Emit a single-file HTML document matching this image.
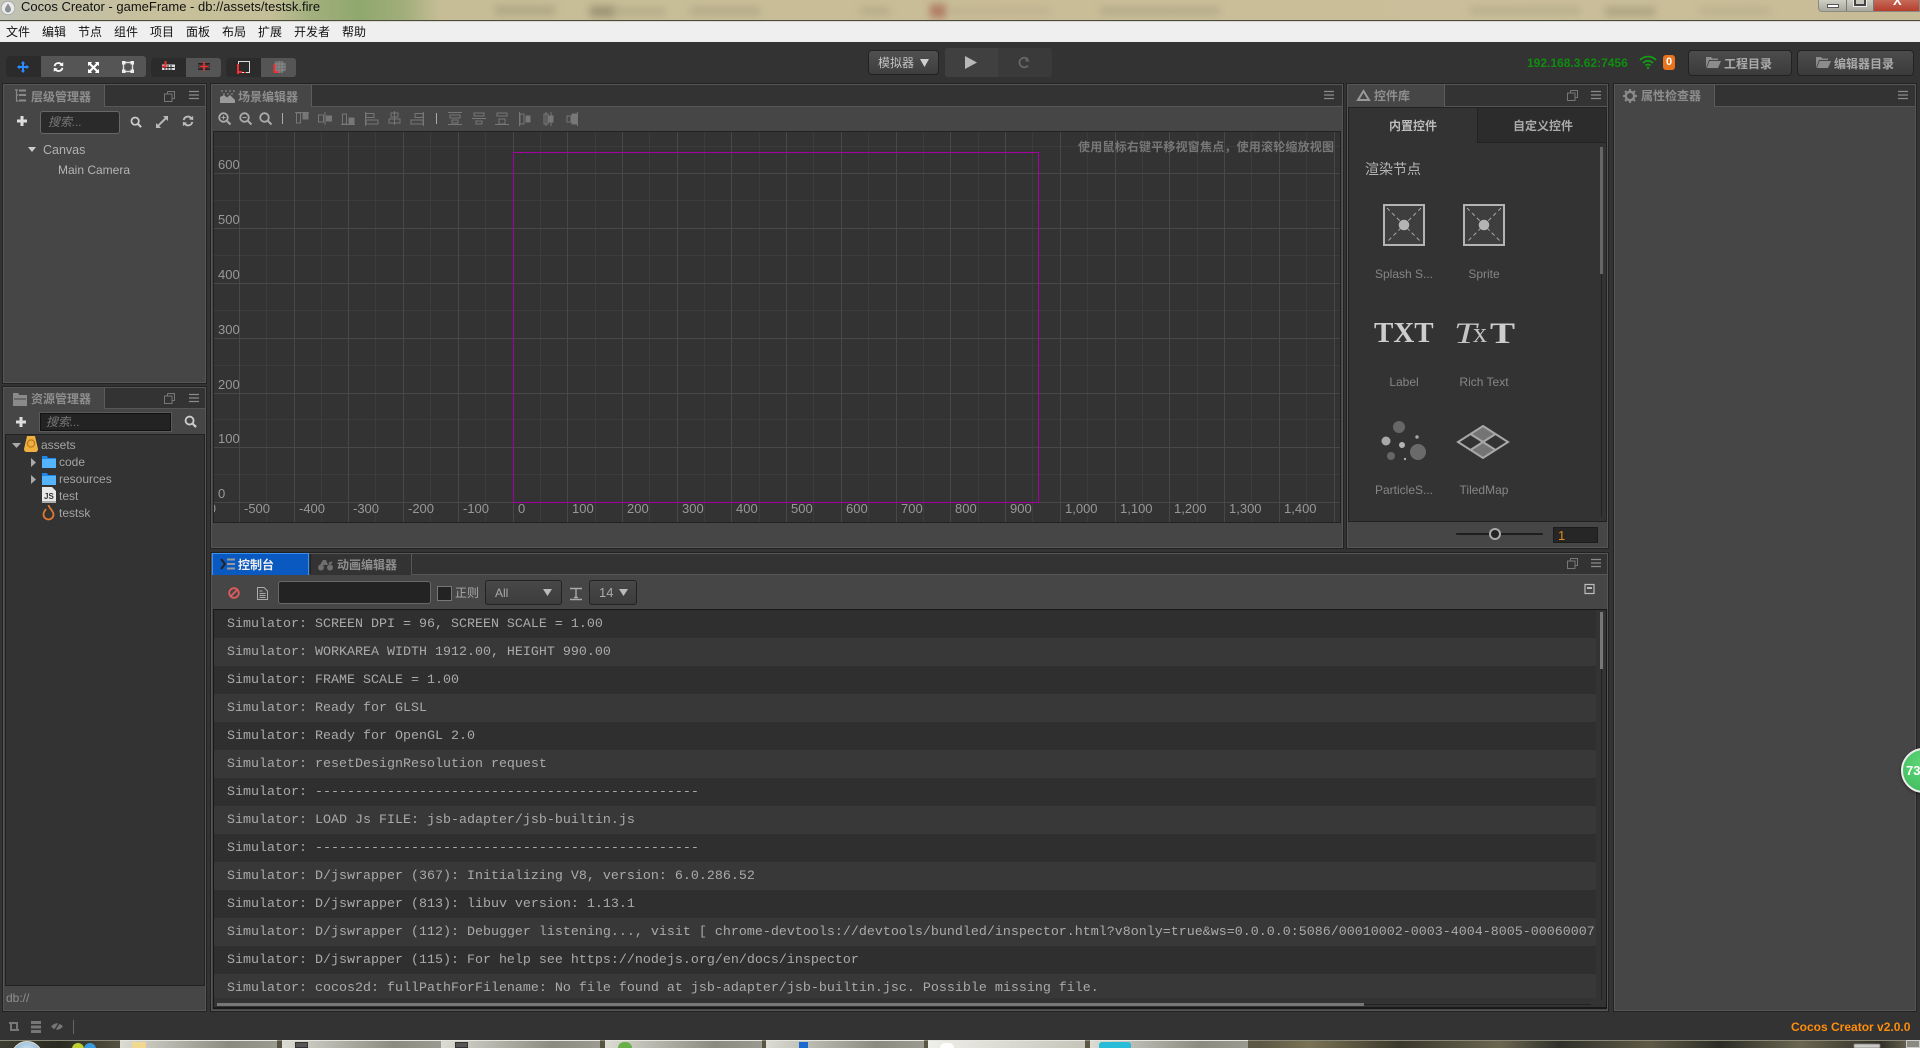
<!DOCTYPE html>
<html lang="zh"><head><meta charset="utf-8"><title>Cocos Creator</title>
<style>
*{box-sizing:border-box;margin:0;padding:0}
html,body{width:1920px;height:1048px;overflow:hidden;background:#333}
body{position:relative;font-family:"Liberation Sans","WenQuanYi Zen Hei","Noto Sans CJK SC",sans-serif;font-size:12px;color:#aaa}
.a{position:absolute}
.t{position:absolute;white-space:nowrap;line-height:16px;height:16px}
.b{font-weight:bold}
svg{position:absolute;overflow:visible}
.panel{position:absolute;background:#464646;border:1px solid #565656;outline:1px solid #222}
.band{position:absolute;background:#333;border-bottom:1px solid #565656}
.tab{position:absolute;background:#464646;border-right:1px solid #5c5c5c}
.tt{color:#8e8e8e;font-weight:bold}
.inp{position:absolute;background:#232323;border:1px solid #686868;border-radius:3px}
.sel{position:absolute;background:linear-gradient(#484848,#3c3c3c);border:1px solid #222;border-radius:3px;color:#aaa}
.row{position:absolute;left:214px;width:1382px;height:28px}
.log{position:absolute;left:227px;font-family:"Liberation Mono",monospace;font-size:13.33px;line-height:16px;white-space:pre;color:#aaa}
.lab{position:absolute;white-space:nowrap;line-height:16px;color:#868686;text-align:center;width:80px}
.blur{position:absolute;filter:blur(4px);opacity:.55}
.tb{position:absolute;top:1040px;height:8px;background:linear-gradient(90deg,#dcdcd4,#8a8a7e 70%,#9a9a90);border-top:1px solid #e6e6e0}
</style></head><body>
<svg width="0" height="0" style="position:absolute">
<defs>
<symbol id="mag" viewBox="0 0 14 14"><circle cx="6" cy="6" r="4.3" fill="none" stroke="currentColor" stroke-width="2"/><path d="M9 9l4 4" stroke="currentColor" stroke-width="2.4"/></symbol>
<symbol id="menu" viewBox="0 0 12 10"><path d="M1 1.5h10M1 5h10M1 8.500h10" stroke="currentColor" stroke-width="1.200"/></symbol>
<symbol id="rest" viewBox="0 0 11 11"><path d="M3.500.5h7v7h-2M3.500.5v2" fill="none" stroke="currentColor"/><path d="M.5 3h7.500v7.500H.5z" fill="none" stroke="currentColor"/></symbol>
<symbol id="ref" viewBox="0 0 14 14"><path d="M2 6a5 5 0 0 1 9-2M12 8a5 5 0 0 1-9 2" fill="none" stroke="currentColor" stroke-width="2.200"/><path d="M8 5l5 1V1zM6 9L1 8v5z" fill="currentColor"/></symbol>
<symbol id="spr" viewBox="0 0 42 42"><rect x="1" y="1" width="40" height="40" fill="#3e3e3e" stroke="#b4b4b4" stroke-width="2"/><path d="M4 4l34 34M38 4L4 38" stroke="#a8a8a8" stroke-dasharray="4 3"/><circle cx="21" cy="21" r="5.300" fill="#b4b4b4"/></symbol>
</defs></svg>

<!-- title bar -->
<div class="a" style="left:0;top:0;width:1920px;height:20px;background:linear-gradient(90deg,#c0c3b6 0,#c2c0a6 60px,#c8c09c 150px,#c4bf98 270px,#a3b07e 310px,#8fa86c 360px,#a2ae7c 405px,#c6bd96 440px,#c9bd97 1000px,#cabf9a 1500px,#c7bc95 1920px);overflow:hidden">
<div class="blur" style="left:495px;top:6px;width:60px;height:9px;background:#9c9478"></div>
<div class="blur" style="left:590px;top:6px;width:25px;height:11px;background:#79735a"></div>
<div class="blur" style="left:615px;top:8px;width:50px;height:7px;background:#a39b7e"></div>
<div class="blur" style="left:690px;top:7px;width:70px;height:8px;background:#a39b7e"></div>
<div class="blur" style="left:860px;top:7px;width:30px;height:8px;background:#a79f80"></div>
<div class="blur" style="left:930px;top:4px;width:16px;height:14px;background:#9c4a3c"></div>
<div class="blur" style="left:950px;top:8px;width:100px;height:6px;background:#b0a788"></div>
<div class="blur" style="left:1100px;top:7px;width:120px;height:8px;background:#a59d7f"></div>
<div class="blur" style="left:1470px;top:7px;width:110px;height:7px;background:#a89f80"></div>
<div class="blur" style="left:1605px;top:7px;width:50px;height:9px;background:#968e70"></div>
<div class="blur" style="left:1700px;top:8px;width:70px;height:6px;background:#aca384"></div>
</div>
<svg style="left:1px;top:1px" width="14" height="14" viewBox="0 0 14 14"><circle cx="7" cy="7" r="6.700" fill="#eaeaea" stroke="#999" stroke-width=".6"/><path d="M7 2.500C5 5.500 4 7 4 8.500a3 3 0 0 0 6 0C10 7 9 5.500 7 2.500z" fill="#8a8f92"/></svg>
<div class="t" style="left:21px;top:-1px;font-size:13px;color:#111">Cocos Creator - gameFrame - db://assets/testsk.fire</div>
<!-- window buttons -->
<div class="a" style="left:1818px;top:0;width:102px;height:12px;border:1px solid #8a8a80;border-top:0;border-radius:0 0 0 4px;background:linear-gradient(#cfcfc4,#a8a89c);overflow:hidden">
<div class="a" style="left:27px;top:0;width:1px;height:12px;background:#777"></div>
<div class="a" style="left:54px;top:0;width:1px;height:12px;background:#777"></div>
<div class="a" style="left:55px;top:0;width:47px;height:12px;background:linear-gradient(#c66a58,#b53a2a)"></div>
<div class="a" style="left:8px;top:4px;width:12px;height:4px;background:#fff;border:1px solid #555"></div>
<div class="a" style="left:35px;top:-3px;width:12px;height:9px;background:#c7c7bc;border:2px solid #444;box-shadow:0 0 0 1px #eee"></div>
<div class="a" style="left:74px;top:-7px;color:#fff;font-weight:bold;font-size:13px">X</div>
</div>
<!-- menu -->
<div class="a" style="left:0;top:20px;width:1920px;height:2px;background:linear-gradient(#4c4a42 50%,#d8d8cc 50%)"></div>
<div class="a" style="left:0;top:22px;width:1920px;height:20px;background:#efefef"></div>
<div class="t" style="left:6px;top:24px;color:#111">文件</div>
<div class="t" style="left:42px;top:24px;color:#111">编辑</div>
<div class="t" style="left:78px;top:24px;color:#111">节点</div>
<div class="t" style="left:114px;top:24px;color:#111">组件</div>
<div class="t" style="left:150px;top:24px;color:#111">项目</div>
<div class="t" style="left:186px;top:24px;color:#111">面板</div>
<div class="t" style="left:222px;top:24px;color:#111">布局</div>
<div class="t" style="left:258px;top:24px;color:#111">扩展</div>
<div class="t" style="left:294px;top:24px;color:#111">开发者</div>
<div class="t" style="left:342px;top:24px;color:#111">帮助</div>

<!-- toolbar left -->
<div class="a" style="left:6px;top:56px;width:140px;height:21px;background:#555;border-radius:3px"></div>
<div class="a" style="left:6px;top:56px;width:35px;height:21px;background:#2b2b2b;border-radius:3px 0 0 3px"></div>
<div class="a" style="left:151px;top:58px;width:70px;height:19px;background:#555;border-radius:3px"></div>
<div class="a" style="left:151px;top:58px;width:35px;height:19px;background:#2b2b2b;border-radius:3px 0 0 3px"></div>
<div class="a" style="left:226px;top:58px;width:70px;height:19px;background:#555;border-radius:3px"></div>
<div class="a" style="left:226px;top:58px;width:35px;height:19px;background:#2b2b2b;border-radius:3px 0 0 3px"></div>
<svg style="left:17px;top:61px" width="12" height="12" viewBox="0 0 12 12"><path d="M6 0l2.200 2.500H7V5h2.500V3.800L12 6 9.500 8.200V7H7v2.500h1.200L6 12 3.800 9.500H5V7H2.500v1.200L0 6l2.500-2.200V5H5V2.500H3.800z" fill="#2a8cff"/></svg>
<svg style="left:53px;top:61px;color:#fff" width="11" height="12"><use href="#ref"/></svg>
<svg style="left:88px;top:62px" width="11" height="11" viewBox="0 0 11 11"><path d="M0 0h4L3 1.500 5.500 4 8 1.500 7 0h4v4L9.500 3 7 5.500 9.500 8 11 7v4H7l1-1.500L5.500 7 3 9.500 4 11H0V7l1.500 1L4 5.500 1.500 3 0 4z" fill="#fff"/></svg>
<svg style="left:122px;top:61px" width="12" height="12" viewBox="0 0 12 12"><rect x="1.500" y="1.500" width="9" height="9" fill="none" stroke="#ddd" stroke-width="1.400"/><path d="M0 0h3.500v3.500H0zM8.500 0H12v3.500H8.500zM0 8.500h3.500V12H0zM8.500 8.500H12V12H8.500z" fill="#eee"/></svg>
<svg style="left:162px;top:61px" width="13" height="11" viewBox="0 0 13 11"><path d="M0 3.500h13V9H0z" fill="#ddd"/><path d="M3 4v5M6 4v5M9 4v5M.5 6.500h12" stroke="#2b2b2b"/><path d="M3.500 0v5.500H0" stroke="#f03030" stroke-width="2" fill="none"/></svg>
<svg style="left:198px;top:61px" width="12" height="11" viewBox="0 0 12 11"><path d="M0 2.500h12v6H0z" fill="#3c3c3c"/><path d="M0 2.500h12M0 8.500h12M3 2v7M6 2v7M9 2v7" stroke="#222"/><path d="M6 1v9M1.500 5.500h9" stroke="#f03030" stroke-width="1.600"/></svg>
<svg style="left:237px;top:61px" width="13" height="13" viewBox="0 0 13 13"><rect x="1.500" y=".5" width="11" height="11" fill="none" stroke="#ddd"/><path d="M1 3v8h4M1 11v2M8 11v1" fill="none" stroke="#f03030" stroke-width="2"/></svg>
<svg style="left:273px;top:61px" width="13" height="13" viewBox="0 0 13 13"><circle cx="7" cy="6" r="6" fill="#6c6c6c"/><path d="M1 3h12M1 6h12M1 9h12M3 0v12M6 0v12M9 0v12" stroke="#888"/><path d="M1.500 3v8h4" fill="none" stroke="#f03030" stroke-width="2"/></svg>

<!-- center toolbar -->
<div class="sel" style="left:868px;top:50px;width:71px;height:25px;background:linear-gradient(#505050,#3e3e3e);border-radius:4px"></div>
<div class="t" style="left:878px;top:55px;color:#c2c2c2">模拟器</div>
<svg style="left:920px;top:59px" width="9" height="8"><path d="M0 0h9L4.500 8z" fill="#cfcfcf"/></svg>
<div class="a" style="left:945px;top:48px;width:54px;height:29px;background:#404040;border-radius:3px 0 0 3px"></div>
<div class="a" style="left:998px;top:48px;width:54px;height:29px;background:#3a3a3a;border-radius:0 3px 3px 0"></div>
<svg style="left:965px;top:56px" width="12" height="13"><path d="M0 0l12 6.500L0 13z" fill="#b8b8b8"/></svg>
<svg style="left:1018px;top:56px" width="12" height="13" viewBox="0 0 12 13"><path d="M10 3.500A4.800 4.800 0 1 0 10 9.500" fill="none" stroke="#666" stroke-width="1.800"/><path d="M7.500 1v4.500H12z" fill="#666"/></svg>

<!-- right toolbar -->
<div class="t b" style="left:1527px;top:55px;color:#0e8e10;font-size:12px">192.168.3.62:7456</div>
<svg style="left:1639px;top:55px" width="18" height="14" viewBox="0 0 18 14"><path d="M1 5a11 11 0 0 1 16 0M4 8a7 7 0 0 1 10 0M6.500 10.500a3.500 3.500 0 0 1 5 0" fill="none" stroke="#12a012" stroke-width="1.700"/><circle cx="9" cy="12.800" r="1.200" fill="#12a012"/></svg>
<div class="a b" style="left:1663px;top:55px;width:12px;height:15px;background:#e8741e;border-radius:3px;color:#fff;text-align:center;line-height:15px;font-size:11px">0</div>
<div class="sel" style="left:1688px;top:50px;width:104px;height:26px;border-radius:4px;background:linear-gradient(#4c4c4c,#3b3b3b)"></div>
<div class="sel" style="left:1797px;top:50px;width:117px;height:26px;border-radius:4px;background:linear-gradient(#4c4c4c,#3b3b3b)"></div>
<svg style="left:1706px;top:57px" width="15" height="11" viewBox="0 0 15 11"><path d="M0 11V0h5l1.500 1.500H12V3H3L0 11zM3.500 4H15l-3 7H.8z" fill="#8c8c8c"/></svg>
<svg style="left:1816px;top:57px" width="15" height="11" viewBox="0 0 15 11"><path d="M0 11V0h5l1.500 1.500H12V3H3L0 11zM3.500 4H15l-3 7H.8z" fill="#8c8c8c"/></svg>
<div class="t b" style="left:1724px;top:56px;color:#aaa">工程目录</div>
<div class="t b" style="left:1834px;top:56px;color:#aaa">编辑器目录</div>

<!-- hierarchy panel -->
<div class="panel" style="left:3px;top:84px;width:203px;height:299px"></div>
<div class="band" style="left:4px;top:85px;width:201px;height:22px"></div>
<div class="tab" style="left:4px;top:85px;width:101px;height:22px"></div>
<svg style="left:14px;top:89px" width="13" height="14" viewBox="0 0 13 14"><path d="M1 1h3M2.500 1v11h2M2.500 6h2" fill="none" stroke="#8a8a8a" stroke-width="1.200"/><path d="M5 .5h7v2H5zM5 5h7v2H5zM5 10.500h7v2H5z" fill="#8a8a8a"/></svg>
<div class="t tt" style="left:31px;top:89px">层级管理器</div>
<svg style="left:164px;top:91px;color:#777" width="11" height="11"><use href="#rest"/></svg>
<svg style="left:188px;top:90px;color:#8a8a8a" width="12" height="10"><use href="#menu"/></svg>
<svg style="left:17px;top:116px" width="10" height="10"><path d="M3.500 0h3v3.500H10v3H6.500V10h-3V6.500H0v-3h3.500z" fill="#ddd"/></svg>
<div class="inp" style="left:40px;top:111px;width:80px;height:23px;background:#2a2a2a"></div>
<div class="t" style="left:48px;top:114px;color:#777;font-style:italic">搜索...</div>
<svg style="left:130px;top:116px;color:#ccc" width="12" height="12"><use href="#mag"/></svg>
<svg style="left:156px;top:116px" width="12" height="12" viewBox="0 0 12 12"><path d="M7 0h5v5l-1.800-1.800L3.200 10 5 12H0V7l1.800 1.800L8.800 1.800z" fill="#bbb"/></svg>
<svg style="left:182px;top:115px;color:#bbb" width="12" height="12"><use href="#ref"/></svg>
<svg style="left:28px;top:147px" width="9" height="5"><path d="M0 0h8L4 5z" fill="#ccc"/></svg>
<div class="t" style="left:43px;top:142px;font-size:12.500px;color:#b0b0b0">Canvas</div>
<div class="t" style="left:58px;top:162px;color:#b4b4b4">Main Camera</div>

<!-- assets panel -->
<div class="panel" style="left:3px;top:387px;width:203px;height:624px"></div>
<div class="band" style="left:4px;top:388px;width:201px;height:21px"></div>
<div class="tab" style="left:4px;top:388px;width:101px;height:21px"></div>
<svg style="left:13px;top:393px" width="14" height="13" viewBox="0 0 14 13"><path d="M0 0h5l1.500 2H14v11H0z" fill="#8a8a8a"/><path d="M1 6h12" stroke="#464646"/></svg>
<div class="t tt" style="left:31px;top:391px">资源管理器</div>
<svg style="left:164px;top:393px;color:#777" width="11" height="11"><use href="#rest"/></svg>
<svg style="left:188px;top:393px;color:#8a8a8a" width="12" height="10"><use href="#menu"/></svg>
<svg style="left:16px;top:417px" width="10" height="10"><path d="M3.500 0h3v3.500H10v3H6.500V10h-3V6.500H0v-3h3.500z" fill="#ddd"/></svg>
<div class="inp" style="left:39px;top:412px;width:133px;height:20px;background:#232323;border:2px solid #111;outline:1px solid #5a5a5a;outline-offset:-1px;border-radius:0"></div>
<div class="t" style="left:46px;top:414px;color:#777;font-style:italic">搜索...</div>
<svg style="left:184px;top:415px;color:#ccc" width="13" height="13"><use href="#mag"/></svg>
<div class="a" style="left:5px;top:434px;width:200px;height:552px;background:#333;border:1px solid #222"></div>
<svg style="left:12px;top:443px" width="9" height="5"><path d="M0 0h9L4.500 5z" fill="#aaa"/></svg>
<svg style="left:24px;top:436px" width="14" height="16" viewBox="0 0 14 16"><path d="M3 0h8l3 13q0 3-3 3H3q-3 0-3-3z" fill="#f0b040"/><circle cx="7" cy="7.500" r="3.600" fill="none" stroke="#b87a1e" stroke-width="1.200"/></svg>
<div class="t" style="left:41px;top:437px;color:#a4a4a4">assets</div>
<svg style="left:31px;top:458px" width="5" height="9"><path d="M0 0l5 4.500L0 9z" fill="#aaa"/></svg>
<svg style="left:42px;top:456px" width="14" height="12" viewBox="0 0 14 12"><path d="M0 0h5l1 2h8v10H0z" fill="#1e88e8"/><path d="M0 3h14v9H0z" fill="#55b4ff"/></svg>
<div class="t" style="left:59px;top:454px;color:#a4a4a4">code</div>
<svg style="left:31px;top:475px" width="5" height="9"><path d="M0 0l5 4.500L0 9z" fill="#aaa"/></svg>
<svg style="left:42px;top:473px" width="14" height="12" viewBox="0 0 14 12"><path d="M0 0h5l1 2h8v10H0z" fill="#1e88e8"/><path d="M0 3h14v9H0z" fill="#55b4ff"/></svg>
<div class="t" style="left:59px;top:471px;color:#a4a4a4">resources</div>
<svg style="left:42px;top:487px" width="14" height="16" viewBox="0 0 14 16"><path d="M0 0h10l4 4v12H0z" fill="#e8e8e8"/><path d="M0 14h14v2H0z" fill="#aaa"/></svg>
<div class="t b" style="left:44px;top:489px;font-size:8px;color:#333;line-height:16px">JS</div>
<div class="t" style="left:59px;top:488px;color:#a4a4a4">test</div>
<svg style="left:42px;top:504px" width="13" height="16" viewBox="0 0 13 16"><path d="M6.500 1C7 4 11.500 7 11.500 10.500a5 5 0 0 1-10 0C1.500 8 3 6.500 4 5" fill="none" stroke="#e07830" stroke-width="1.800"/><path d="M6.500 7c1 2 2.500 3 2.500 4.500a2.500 2.500 0 0 1-5 0C4 10 5.500 9 6.500 7z" fill="#333"/></svg>
<div class="t" style="left:59px;top:505px;color:#a4a4a4">testsk</div>
<div class="t" style="left:6px;top:990px;color:#8f8f8f;font-size:12px">db://</div>

<!-- scene panel -->
<div class="panel" style="left:211px;top:84px;width:1132px;height:464px"></div>
<div class="band" style="left:212px;top:85px;width:1130px;height:22px"></div>
<div class="tab" style="left:212px;top:85px;width:100px;height:22px"></div>
<svg style="left:220px;top:89px" width="15" height="14" viewBox="0 0 15 14"><path d="M1 1h2v2H1zM5 1h2v2H5zM9 1h2v2H9zM13 1h2v2h-2zM3 4h2v2H3zM7 4h2v2H7zM11 4h2v2h-2z" fill="#6c6c6c"/><path d="M0 14V8l4-2 3 2.500L10 6l5 5v3z" fill="#9a9a9a"/></svg>
<div class="t tt" style="left:238px;top:89px">场景编辑器</div>
<svg style="left:1323px;top:90px;color:#8a8a8a" width="12" height="10"><use href="#menu"/></svg>
<!-- scene tools -->
<svg style="left:218px;top:112px" width="13" height="13" viewBox="0 0 13 13"><circle cx="5.500" cy="5.500" r="4.300" fill="none" stroke="#aaa" stroke-width="1.800"/><path d="M8.500 8.500l4 4" stroke="#aaa" stroke-width="2"/><path d="M3.500 5.500h4M5.500 3.500v4" stroke="#aaa"/></svg>
<svg style="left:239px;top:112px" width="13" height="13" viewBox="0 0 13 13"><circle cx="5.500" cy="5.500" r="4.300" fill="none" stroke="#aaa" stroke-width="1.800"/><path d="M8.500 8.500l4 4" stroke="#aaa" stroke-width="2"/><path d="M3.500 5.500h4" stroke="#aaa"/></svg>
<svg style="left:259px;top:112px" width="13" height="13" viewBox="0 0 13 13"><circle cx="5.500" cy="5.500" r="4.300" fill="none" stroke="#aaa" stroke-width="1.800"/><path d="M8.500 8.500l4 4" stroke="#aaa" stroke-width="2"/></svg>
<div class="a" style="left:282px;top:113px;width:1px;height:11px;background:#aaa"></div>
<svg style="left:295px;top:112px" width="14" height="13" viewBox="0 0 14 13" fill="none" stroke="#777"><path d="M0 .5h14"/><path d="M1.500 1v10h4V1z"/><path d="M8 1h5v6H8z" fill="#777"/></svg>
<svg style="left:318px;top:112px" width="14" height="13" viewBox="0 0 14 13" fill="none" stroke="#777"><path d="M7 0v13"/><path d="M.5 3h5v7h-5z"/><path d="M8.500 4h5v5h-5z" fill="#777"/></svg>
<svg style="left:341px;top:112px" width="14" height="13" viewBox="0 0 14 13" fill="none" stroke="#777"><path d="M0 12.500h14"/><path d="M1.500 2h4v10h-4z"/><path d="M8 6h5v6H8z" fill="#777"/></svg>
<svg style="left:365px;top:112px" width="13" height="14" viewBox="0 0 13 14" fill="none" stroke="#777"><path d="M.5 0v14"/><path d="M1 1.500h8v4H1z"/><path d="M1 8h12v4H1z"/></svg>
<svg style="left:388px;top:111px" width="13" height="14" viewBox="0 0 13 14" fill="none" stroke="#777"><path d="M6.500 0v14"/><path d="M3 2h7v4H3z"/><path d="M1 8h11v4H1z"/></svg>
<svg style="left:411px;top:112px" width="13" height="14" viewBox="0 0 13 14" fill="none" stroke="#777"><path d="M12.500 0v14"/><path d="M4 1.500h8v4H4z"/><path d="M0 8h12v4H0z"/></svg>
<div class="a" style="left:436px;top:113px;width:1px;height:11px;background:#aaa"></div>
<svg style="left:448px;top:112px" width="14" height="13" viewBox="0 0 14 13" fill="none" stroke="#777"><path d="M0 .5h14M0 12.500h14"/><path d="M2 3h10v3H2z"/><path d="M4 8h6v3H4z"/></svg>
<svg style="left:472px;top:112px" width="14" height="13" viewBox="0 0 14 13" fill="none" stroke="#777"><path d="M0 6.500h14"/><path d="M2 1h10v3H2z"/><path d="M4 9h6v3H4z"/></svg>
<svg style="left:495px;top:112px" width="14" height="13" viewBox="0 0 14 13" fill="none" stroke="#777"><path d="M0 12.500h14"/><path d="M2 1h10v3H2z"/><path d="M4 7h6v5H4z"/></svg>
<svg style="left:519px;top:112px" width="12" height="14" viewBox="0 0 12 14" fill="none" stroke="#777"><path d="M.5 0v14"/><path d="M1 2h4v10H1z"/><path d="M7 4h4v6H7z" fill="#777"/></svg>
<svg style="left:542px;top:112px" width="12" height="14" viewBox="0 0 12 14" fill="none" stroke="#777"><path d="M4 0v14M9 0v14"/><path d="M2 2h4v10H2z"/><path d="M7 4h4v6H7z" fill="#777"/></svg>
<svg style="left:566px;top:112px" width="12" height="14" viewBox="0 0 12 14" fill="none" stroke="#777"><path d="M11.500 0v14"/><path d="M6 2h5v10H6z" fill="#777"/><path d="M1 4h4v6H1z"/></svg>

<!-- grid -->
<div class="a" style="left:213px;top:131px;width:1128px;height:392px;background:#333;border:1px solid #222;overflow:hidden">
<svg style="left:-214px;top:-132px" width="1920" height="1048" viewBox="0 0 1920 1048" shape-rendering="crispEdges">
<path stroke="#3c3c3c" fill="none" d="M266.500 132v390M321.500 132v390M375.500 132v390M430.500 132v390M485.500 132v390M540.500 132v390M595.500 132v390M649.500 132v390M704.500 132v390M759.500 132v390M813.500 132v390M868.500 132v390M923.500 132v390M978.500 132v390M1032.500 132v390M1087.500 132v390M1142.500 132v390M1197.500 132v390M1251.500 132v390M1306.500 132v390M214 146.500h1127M214 200.500h1127M214 255.500h1127M214 310.500h1127M214 365.500h1127M214 419.500h1127M214 474.500h1127"/>
<path stroke="#484848" fill="none" d="M239.500 132v390M294.500 132v390M348.500 132v390M403.500 132v390M458.500 132v390M513.500 132v390M567.500 132v390M622.500 132v390M677.500 132v390M731.500 132v390M786.500 132v390M841.500 132v390M896.500 132v390M950.500 132v390M1005.500 132v390M1060.500 132v390M1115.500 132v390M1169.500 132v390M1224.500 132v390M1279.500 132v390M1334.500 132v390M214 173.500h1127M214 228.500h1127M214 283.500h1127M214 338.500h1127M214 393.500h1127M214 447.500h1127M214 502.500h1127"/>
<path stroke="#a400a4" fill="none" d="M513.500 152.500H1038.500V502.500H513.500z"/>
</svg>
<div class="t" style="left:4px;top:25px;font-size:13px;color:#989898">600</div>
<div class="t" style="left:4px;top:80px;font-size:13px;color:#989898">500</div>
<div class="t" style="left:4px;top:135px;font-size:13px;color:#989898">400</div>
<div class="t" style="left:4px;top:190px;font-size:13px;color:#989898">300</div>
<div class="t" style="left:4px;top:245px;font-size:13px;color:#989898">200</div>
<div class="t" style="left:4px;top:299px;font-size:13px;color:#989898">100</div>
<div class="t" style="left:4px;top:354px;font-size:13px;color:#989898">0</div>
<div class="t" style="left:-24px;top:369px;font-size:13px;color:#989898">-600</div>
<div class="t" style="left:30px;top:369px;font-size:13px;color:#989898">-500</div>
<div class="t" style="left:85px;top:369px;font-size:13px;color:#989898">-400</div>
<div class="t" style="left:139px;top:369px;font-size:13px;color:#989898">-300</div>
<div class="t" style="left:194px;top:369px;font-size:13px;color:#989898">-200</div>
<div class="t" style="left:249px;top:369px;font-size:13px;color:#989898">-100</div>
<div class="t" style="left:304px;top:369px;font-size:13px;color:#989898">0</div>
<div class="t" style="left:358px;top:369px;font-size:13px;color:#989898">100</div>
<div class="t" style="left:413px;top:369px;font-size:13px;color:#989898">200</div>
<div class="t" style="left:468px;top:369px;font-size:13px;color:#989898">300</div>
<div class="t" style="left:522px;top:369px;font-size:13px;color:#989898">400</div>
<div class="t" style="left:577px;top:369px;font-size:13px;color:#989898">500</div>
<div class="t" style="left:632px;top:369px;font-size:13px;color:#989898">600</div>
<div class="t" style="left:687px;top:369px;font-size:13px;color:#989898">700</div>
<div class="t" style="left:741px;top:369px;font-size:13px;color:#989898">800</div>
<div class="t" style="left:796px;top:369px;font-size:13px;color:#989898">900</div>
<div class="t" style="left:851px;top:369px;font-size:13px;color:#989898">1,000</div>
<div class="t" style="left:906px;top:369px;font-size:13px;color:#989898">1,100</div>
<div class="t" style="left:960px;top:369px;font-size:13px;color:#989898">1,200</div>
<div class="t" style="left:1015px;top:369px;font-size:13px;color:#989898">1,300</div>
<div class="t" style="left:1070px;top:369px;font-size:13px;color:#989898">1,400</div>
</div>
<div class="t b" style="left:1078px;top:139px;color:#777;letter-spacing:.2px">使用鼠标右键平移视窗焦点，使用滚轮缩放视图</div>

<!-- controls panel -->
<div class="panel" style="left:1347px;top:84px;width:261px;height:464px"></div>
<div class="band" style="left:1348px;top:85px;width:259px;height:22px"></div>
<div class="tab" style="left:1348px;top:85px;width:97px;height:22px"></div>
<svg style="left:1357px;top:90px" width="13" height="11"><path d="M6.500 1L12 10H1z" fill="none" stroke="#9a9a9a" stroke-width="2"/></svg>
<div class="t tt" style="left:1374px;top:88px">控件库</div>
<svg style="left:1567px;top:90px;color:#777" width="11" height="11"><use href="#rest"/></svg>
<svg style="left:1590px;top:90px;color:#8a8a8a" width="12" height="10"><use href="#menu"/></svg>
<div class="a" style="left:1348px;top:107px;width:259px;height:415px;background:#333;border:1px solid #222"></div>
<div class="a" style="left:1477px;top:107px;width:130px;height:36px;background:#2c2c2c;border:1px solid #222"></div>
<div class="t b" style="left:1389px;top:118px;color:#bbb">内置控件</div>
<div class="t b" style="left:1513px;top:118px;color:#aaa">自定义控件</div>
<div class="a" style="left:1601px;top:147px;width:1px;height:370px;background:#222"></div>
<div class="a" style="left:1600px;top:147px;width:3px;height:127px;background:#666"></div>
<div class="t" style="left:1365px;top:161px;font-size:14px;color:#b4b4b4">渲染节点</div>
<svg style="left:1383px;top:204px" width="42" height="42"><use href="#spr"/></svg>
<svg style="left:1463px;top:204px" width="42" height="42"><use href="#spr"/></svg>
<div class="lab" style="left:1364px;top:266px">Splash S...</div>
<div class="lab" style="left:1444px;top:266px">Sprite</div>
<div class="t" style="left:1374px;top:322px;font:bold 29px/22px 'Liberation Serif',serif;height:22px;color:#cdcdcd">TXT</div>
<div class="t" style="left:1454px;top:322px;font:italic 30px/24px 'Liberation Serif',serif;height:24px;color:#c4c4c4;transform:scaleX(1.35);transform-origin:0 0">T</div>
<div class="t" style="left:1473px;top:322px;font:28px/24px 'Liberation Serif',serif;height:24px;color:#c4c4c4">x</div>
<div class="t" style="left:1490px;top:322px;font:bold 30px/24px 'Liberation Serif',serif;height:24px;color:#cdcdcd;transform:scaleX(1.25);transform-origin:0 0">T</div>
<div class="lab" style="left:1364px;top:374px">Label</div>
<div class="lab" style="left:1444px;top:374px">Rich Text</div>
<svg style="left:1380px;top:420px" width="48" height="42" viewBox="0 0 48 42">
<circle cx="19" cy="7" r="6" fill="#666"/><circle cx="6" cy="21" r="4.500" fill="#a8a8a8"/><circle cx="22" cy="25" r="3" fill="#b4b4b4"/><circle cx="37" cy="17" r="1.700" fill="#a8a8a8"/><circle cx="38" cy="32" r="8" fill="#6a6a6a"/><circle cx="11" cy="36" r="4" fill="#666"/><circle cx="25" cy="39" r="1.200" fill="#aaa"/></svg>
<svg style="left:1457px;top:425px" width="52" height="36" viewBox="0 0 52 36">
<path d="M26 1l12.500 8L26 17 13.500 9zM26 17l12.500 8L26 33l-12.500-8z" fill="#747474"/>
<path d="M26 1l25 16-25 16L1 17zM13.500 9l25 16M38.500 9l-25 16" fill="none" stroke="#a8a8a8" stroke-width="2"/></svg>
<div class="lab" style="left:1364px;top:482px">ParticleS...</div>
<div class="lab" style="left:1444px;top:482px">TiledMap</div>
<div class="a" style="left:1456px;top:533px;width:87px;height:2px;background:#1e1e1e;border-radius:1px"></div>
<div class="a" style="left:1489px;top:528px;width:12px;height:12px;border-radius:50%;background:#222;border:2px solid #aaa"></div>
<div class="a" style="left:1553px;top:527px;width:45px;height:16px;background:#262626;border:1px solid #1c1c1c"></div>
<div class="t" style="left:1558px;top:528px;color:#e08a20;font-size:13px">1</div>

<!-- console panel -->
<div class="panel" style="left:211px;top:553px;width:1397px;height:458px"></div>
<div class="band" style="left:212px;top:554px;width:1395px;height:21px"></div>
<div class="a" style="left:212px;top:553px;width:97px;height:22px;background:#0a59c0;border-top:1px solid #3a90f0;border-left:1px solid #3a90f0;border-right:1px solid #3a90f0"></div>
<div class="a" style="left:310px;top:554px;width:102px;height:21px;background:#333;border-right:1px solid #565656;border-left:1px solid #222"></div>
<svg style="left:220px;top:558px" width="15" height="12" viewBox="0 0 15 12"><path d="M1 1l4 5-4 5" fill="none" stroke="#222" stroke-width="2"/><path d="M7 1.500h8M7 6h8M7 10.500h8" stroke="#999" stroke-width="2"/></svg>
<div class="t b" style="left:238px;top:557px;color:#eee;font-size:12px">控制台</div>
<svg style="left:318px;top:559px" width="16" height="12" viewBox="0 0 16 12"><circle cx="3" cy="8.500" r="3" fill="#6e6e6e"/><circle cx="12" cy="8.500" r="3" fill="#6e6e6e"/><path d="M2 6l3-5h3l2 5z" fill="#6e6e6e"/><path d="M11 5l3-2" stroke="#6e6e6e" stroke-width="2"/></svg>
<div class="t tt" style="left:337px;top:557px">动画编辑器</div>
<svg style="left:1567px;top:558px;color:#777" width="11" height="11"><use href="#rest"/></svg>
<svg style="left:1590px;top:558px;color:#8a8a8a" width="12" height="10"><use href="#menu"/></svg>
<svg style="left:228px;top:587px" width="12" height="12" viewBox="0 0 12 12"><circle cx="6" cy="6" r="4.800" fill="none" stroke="#e05c5c" stroke-width="1.800"/><path d="M2.800 9.200l6.400-6.400" stroke="#e05c5c" stroke-width="1.800"/></svg>
<svg style="left:257px;top:587px" width="11" height="13" viewBox="0 0 11 13" fill="none" stroke="#aaa"><path d="M.5.500h6.500l3.500 3.500v8.500H.5zM2.500 4h3M2.500 6.500h6M2.500 8.500h6M2.500 10.500h6"/></svg>
<div class="inp" style="left:278px;top:581px;width:153px;height:23px"></div>
<div class="a" style="left:437px;top:586px;width:15px;height:15px;background:#232323;border:1px solid #777"></div>
<div class="t" style="left:455px;top:585px;color:#aaa">正则</div>
<div class="sel" style="left:485px;top:580px;width:77px;height:25px"></div>
<div class="t" style="left:495px;top:585px;color:#aaa">All</div>
<svg style="left:543px;top:589px" width="9" height="7"><path d="M0 0h9L4.500 7z" fill="#bbb"/></svg>
<svg style="left:570px;top:587px" width="12" height="13" viewBox="0 0 12 13"><path d="M0 1.500h12M6 1.500v9M4 10.500h4M0 12.500h12" stroke="#aaa" stroke-width="1.400" fill="none"/></svg>
<div class="sel" style="left:589px;top:580px;width:48px;height:25px"></div>
<div class="t" style="left:599px;top:585px;color:#aaa;font-size:13px">14</div>
<svg style="left:619px;top:589px" width="9" height="7"><path d="M0 0h9L4.500 7z" fill="#bbb"/></svg>
<svg style="left:1584px;top:584px" width="11" height="10" viewBox="0 0 11 10"><path d="M1 .5h9v9H1z" fill="none" stroke="#bbb" stroke-width="1.200"/><path d="M3 3h5v2H3z" fill="#bbb"/></svg>
<!-- log -->
<div class="a" style="left:213px;top:609px;width:1394px;height:400px;background:#333;border:1px solid #181818;border-bottom-width:2px"></div>
<div class="row" style="top:610px;background:#2f2f2f"></div>
<div class="row" style="top:638px;background:#383838"></div>
<div class="row" style="top:666px;background:#2f2f2f"></div>
<div class="row" style="top:694px;background:#383838"></div>
<div class="row" style="top:722px;background:#2f2f2f"></div>
<div class="row" style="top:750px;background:#383838"></div>
<div class="row" style="top:778px;background:#2f2f2f"></div>
<div class="row" style="top:806px;background:#383838"></div>
<div class="row" style="top:834px;background:#2f2f2f"></div>
<div class="row" style="top:862px;background:#383838"></div>
<div class="row" style="top:890px;background:#2f2f2f"></div>
<div class="row" style="top:918px;background:#383838"></div>
<div class="row" style="top:946px;background:#2f2f2f"></div>
<div class="row" style="top:974px;height:24px;background:#383838"></div>
<div class="log" style="top:617px">Simulator: SCREEN DPI = 96, SCREEN SCALE = 1.00</div>
<div class="log" style="top:645px">Simulator: WORKAREA WIDTH 1912.00, HEIGHT 990.00</div>
<div class="log" style="top:673px">Simulator: FRAME SCALE = 1.00</div>
<div class="log" style="top:701px">Simulator: Ready for GLSL</div>
<div class="log" style="top:729px">Simulator: Ready for OpenGL 2.0</div>
<div class="log" style="top:757px">Simulator: resetDesignResolution request</div>
<div class="log" style="top:785px">Simulator: ------------------------------------------------</div>
<div class="log" style="top:813px">Simulator: LOAD Js FILE: jsb-adapter/jsb-builtin.js</div>
<div class="log" style="top:841px">Simulator: ------------------------------------------------</div>
<div class="log" style="top:869px">Simulator: D/jswrapper (367): Initializing V8, version: 6.0.286.52</div>
<div class="log" style="top:897px">Simulator: D/jswrapper (813): libuv version: 1.13.1</div>
<div class="log" style="top:925px;width:1369px;overflow:hidden">Simulator: D/jswrapper (112): Debugger listening..., visit [ chrome-devtools://devtools/bundled/inspector.html?v8only=true&amp;ws=0.0.0.0:5086/00010002-0003-4004-8005-00060007</div>
<div class="log" style="top:953px">Simulator: D/jswrapper (115): For help see https://nodejs.org/en/docs/inspector</div>
<div class="log" style="top:981px">Simulator: cocos2d: fullPathForFilename: No file found at jsb-adapter/jsb-builtin.jsc. Possible missing file.</div>
<div class="a" style="left:1601px;top:612px;width:1px;height:388px;background:#222"></div>
<div class="a" style="left:1600px;top:612px;width:3px;height:57px;background:#777"></div>
<div class="a" style="left:217px;top:1004px;width:1374px;height:1px;background:#222"></div>
<div class="a" style="left:217px;top:1003px;width:1147px;height:3px;background:#777"></div>

<!-- inspector -->
<div class="panel" style="left:1614px;top:84px;width:302px;height:927px"></div>
<div class="band" style="left:1615px;top:85px;width:300px;height:22px"></div>
<div class="tab" style="left:1615px;top:85px;width:100px;height:22px"></div>
<svg style="left:1623px;top:89px" width="14" height="14" viewBox="0 0 14 14"><circle cx="7" cy="7" r="4.200" fill="none" stroke="#8a8a8a" stroke-width="2.400"/><path d="M7 0v3M7 11v3M0 7h3M11 7h3M2 2l2 2M10 10l2 2M12 2l-2 2M4 10l-2 2" stroke="#8a8a8a" stroke-width="2"/></svg>
<div class="t tt" style="left:1641px;top:88px">属性检查器</div>
<svg style="left:1897px;top:90px;color:#8a8a8a" width="12" height="10"><use href="#menu"/></svg>
<!-- green ball -->
<div class="a" style="left:1901px;top:748px;width:45px;height:45px;border-radius:50%;background:radial-gradient(circle at 50% 35%,#5ed878,#3eb85c);border:2px solid #eee;box-shadow:0 1px 3px rgba(0,0,0,.5);color:#fff;font-weight:bold;font-size:13px;line-height:41px;padding-left:3px">73</div>

<!-- status bar -->
<svg style="left:8px;top:1021px" width="12" height="11" viewBox="0 0 12 11"><path d="M1 2h8v6M11 9H3V3" fill="none" stroke="#777" stroke-width="2"/></svg>
<svg style="left:30px;top:1020px" width="12" height="14" viewBox="0 0 12 14"><path d="M1 1h10v3H1zM1 5.500h10v3H1zM1 10h10v3H1z" fill="#777"/></svg>
<svg style="left:51px;top:1021px" width="12" height="11" viewBox="0 0 12 11"><path d="M0 5.500Q6-1 12 5.500 6 12 0 5.500z" fill="#777"/><path d="M3 10l6-9" stroke="#333" stroke-width="1.400"/></svg>
<div class="a" style="left:73px;top:1020px;width:1px;height:14px;background:#666"></div>
<div class="t b" style="left:1791px;top:1019px;color:#ff8c0a">Cocos Creator v2.0.0</div>

<!-- taskbar -->
<div class="a" style="left:0;top:1040px;width:1920px;height:8px;background:linear-gradient(90deg,#3c3c30 0,#2a2a22 60px,#555142 120px,#5c5844 1260px,#7a7254 1310px,#3a382c 1400px,#6a6650 1500px,#30302a 1560px,#5e5a46 1650px,#2c2c26 1720px,#6a6650 1800px,#302e26 1880px,#807a64 1920px);border-top:1px solid #8c8a78"></div>
<div class="a" style="left:11px;top:1041px;width:32px;height:32px;border-radius:50%;background:radial-gradient(circle at 50% 30%,#cfe4f2,#5a8ab0);border:1px solid #ddd"></div>
<div class="a" style="left:72px;top:1043px;width:12px;height:12px;border-radius:50%;background:#c0d030"></div>
<div class="a" style="left:84px;top:1043px;width:12px;height:12px;border-radius:50%;background:#3a9ae0"></div>
<div class="tb" style="left:120px;width:157px"></div>
<div class="tb" style="left:282px;width:159px"></div>
<div class="tb" style="left:441px;width:159px"></div>
<div class="tb" style="left:605px;width:157px"></div>
<div class="tb" style="left:766px;width:158px"></div>
<div class="tb" style="left:928px;width:157px;background:linear-gradient(90deg,#f0f0ea,#c4c4b8)"></div>
<div class="tb" style="left:1090px;width:158px"></div>
<div class="a" style="left:132px;top:1042px;width:14px;height:6px;background:#f0d890"></div>
<div class="a" style="left:295px;top:1042px;width:13px;height:6px;background:#555;border:1px solid #333"></div>
<div class="a" style="left:455px;top:1042px;width:13px;height:6px;background:#555;border:1px solid #333"></div>
<div class="a" style="left:618px;top:1042px;width:14px;height:6px;border-radius:7px 7px 0 0;background:#6ab04a"></div>
<div class="a" style="left:799px;top:1042px;width:9px;height:6px;background:#1a6ad0"></div>
<div class="a" style="left:940px;top:1043px;width:14px;height:5px;border-radius:7px 7px 0 0;background:#fff"></div>
<div class="a" style="left:1099px;top:1042px;width:32px;height:6px;border-radius:3px 3px 0 0;background:#28bcd8"></div>
<div class="a" style="left:1854px;top:1044px;width:26px;height:4px;background:#eee;opacity:.8;filter:blur(.5px)"></div>
<div class="a" style="left:1906px;top:1040px;width:14px;height:8px;background:#8a8a80;border:1px solid #ccc"></div>
</body></html>
